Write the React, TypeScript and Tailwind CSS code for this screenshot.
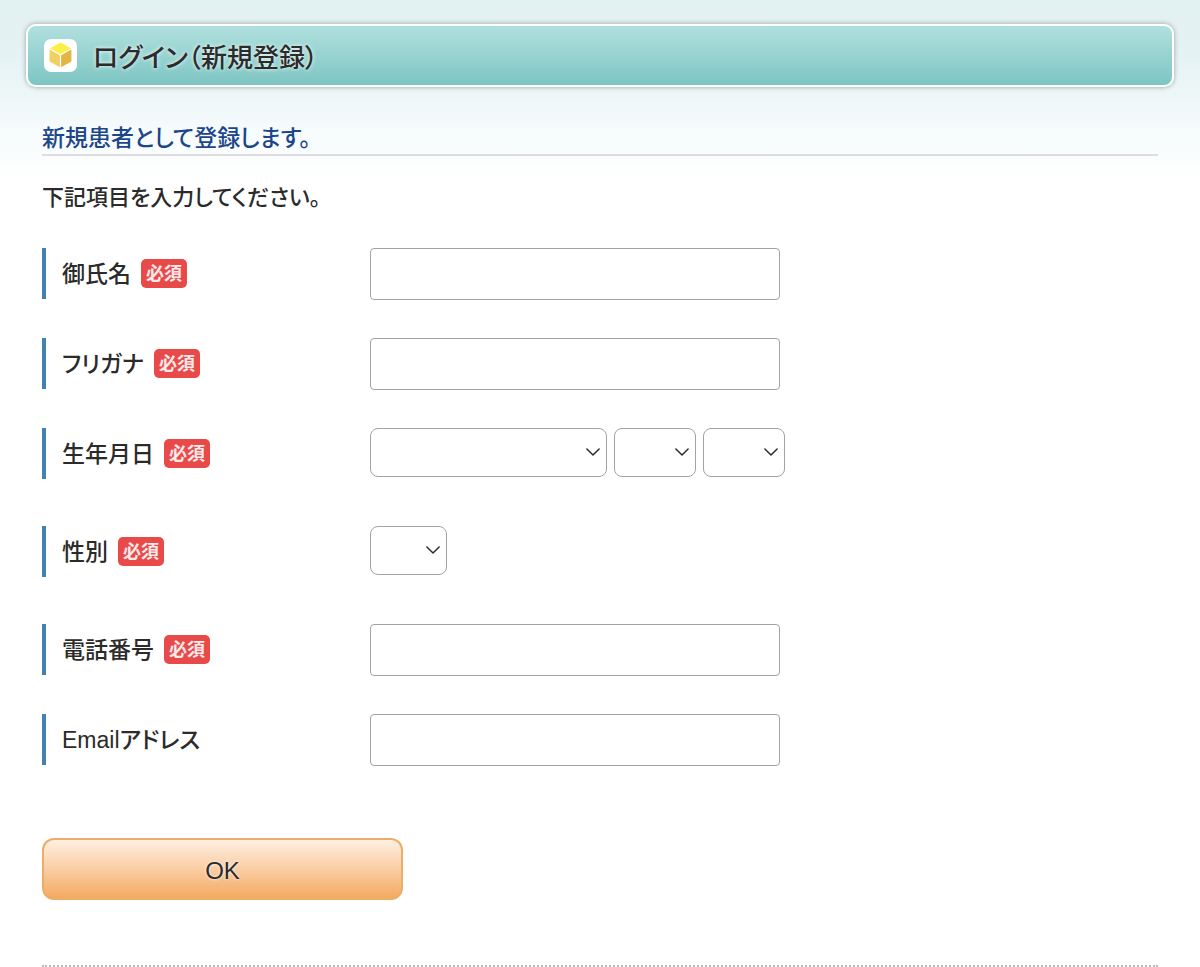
import React, { useState } from 'react';

interface Field {
  id: string;
  label: string;
  required: boolean;
  type: 'text' | 'tel' | 'email';
}

const nameFields: Field[] = [
  { id: 'name', label: '御氏名', required: true, type: 'text' },
  { id: 'kana', label: 'フリガナ', required: true, type: 'text' },
];

const contactFields: Field[] = [
  { id: 'tel', label: '電話番号', required: true, type: 'tel' },
  { id: 'email', label: 'Emailアドレス', required: false, type: 'email' },
];

const range = (from: number, to: number) =>
  Array.from({ length: to - from + 1 }, (_, i) => String(from + i));

const CubeIcon: React.FC = () => (
  <svg viewBox="0 0 33 33" className="size-[33px] shrink-0" aria-hidden="true">
    <rect width="33" height="33" rx="7" fill="#fff" />
    <path d="M16.5 3.5 27 9.3 16.5 15.2 6 9.3Z" fill="#fdee45" />
    <path d="M5.6 10.6 15.9 16.3V28.2L5.6 22.4Z" fill="#f0d062" />
    <path d="M27.4 10.6 17.1 16.3V28.2L27.4 22.4Z" fill="#e3b544" />
  </svg>
);

const RequiredBadge: React.FC = () => (
  <span className="ml-2.5 flex h-[29px] w-[46px] items-center justify-center rounded-[5px] bg-[#e84a4a] text-lg font-bold text-[#ffe9e9]">
    必須
  </span>
);

interface RowProps {
  label: string;
  htmlFor: string;
  required: boolean;
  tall?: boolean;
  children: React.ReactNode;
}

const Row: React.FC<RowProps> = ({ label, htmlFor, required, tall, children }) => (
  <div className={`flex flex-wrap items-start ${tall ? 'min-h-[60px]' : 'min-h-[52px]'}`}>
    <div className="flex h-[51px] w-[328px] items-center border-l-4 border-[#4381b1] pl-4">
      <label htmlFor={htmlFor} className="font-medium">{label}</label>
      {required && <RequiredBadge />}
    </div>
    {children}
  </div>
);

interface SelectBoxProps {
  id: string;
  name: string;
  options: string[];
  width: string;
}

const SelectBox: React.FC<SelectBoxProps> = ({ id, name, options, width }) => {
  const [value, setValue] = useState('');

  return (
    <div className={`relative ${width}`}>
      <select
        id={id}
        aria-label={name}
        value={value}
        onChange={e => setValue(e.target.value)}
        className="h-[49px] w-full appearance-none rounded-lg border border-[#a3a3a3] bg-white pr-6 pl-3"
      >
        <option value=""></option>
        {options.map(option => (
          <option key={option} value={option}>{option}</option>
        ))}
      </select>
      <svg
        viewBox="0 0 14 8"
        className="pointer-events-none absolute top-5 right-[7px] h-2 w-3.5"
        fill="none"
        stroke="#2b2b2b"
        strokeWidth="1.5"
        strokeLinecap="round"
        strokeLinejoin="round"
        aria-hidden="true"
      >
        <path d="M0.9 1 7 7 13.1 1" />
      </svg>
    </div>
  );
};

const TextRow: React.FC<{ field: Field }> = ({ field }) => (
  <Row label={field.label} htmlFor={field.id} required={field.required}>
    <input
      id={field.id}
      type={field.type}
      className="h-[52px] w-[410px] max-w-full rounded border border-[#a3a3a3] bg-white px-3"
    />
  </Row>
);

const App: React.FC = () => {
  return (
    <div className="min-h-screen bg-white bg-[linear-gradient(to_bottom,#e1f0f1_0,#e6f3f4_60px,#f6fbfc_130px,#ffffff_180px)] pt-6 font-['Liberation_Sans','Noto_Sans_CJK_JP',sans-serif] text-[23px] leading-8 text-[#2b2b2b] [font-feature-settings:'palt']">
      <header className="mx-[26px] flex h-[63px] items-center gap-4 rounded-[10px] border-2 border-white bg-linear-to-b from-[#b0e0dd] to-[#7dc5c3] px-4 shadow-[0_0_5px_rgba(0,0,0,0.35)]">
        <CubeIcon />
        <h1 className="pt-1 text-[26px] font-medium [text-shadow:0_0_4px_#fff]">ログイン（新規登録）</h1>
      </header>

      <main className="px-[42px]">
        <h2 className="mt-[35px] border-b-2 border-[#dddddf] font-medium text-[#1c468b]">
          新規患者として登録します。
        </h2>
        <p className="mt-[26px] text-[22px] leading-8 font-medium">下記項目を入力してください。</p>

        <form onSubmit={e => e.preventDefault()}>
          <div className="mt-[34px] flex flex-col gap-[38px]">
            {nameFields.map(field => (
              <TextRow key={field.id} field={field} />
            ))}

            <Row label="生年月日" htmlFor="birth-year" required tall>
              <div className="flex gap-[7px]">
                <SelectBox id="birth-year" name="年" options={range(1920, 2024)} width="w-[237px]" />
                <SelectBox id="birth-month" name="月" options={range(1, 12)} width="w-[82px]" />
                <SelectBox id="birth-day" name="日" options={range(1, 31)} width="w-[82px]" />
              </div>
            </Row>

            <Row label="性別" htmlFor="gender" required tall>
              <SelectBox id="gender" name="性別" options={['男', '女']} width="w-[77px]" />
            </Row>

            {contactFields.map(field => (
              <TextRow key={field.id} field={field} />
            ))}
          </div>

          <button
            type="submit"
            className="mt-[72px] h-[62px] w-[361px] max-w-full rounded-xl border-2 border-[#ebae68] bg-linear-to-b from-[#feefe2] to-[#f3aa5e] pt-1 text-2xl [text-shadow:0_0_3px_#fff]"
          >
            OK
          </button>
        </form>

        <div className="mt-[65px] border-t-2 border-dotted border-[#b8b8b8]" />
      </main>
    </div>
  );
};

export default App;
